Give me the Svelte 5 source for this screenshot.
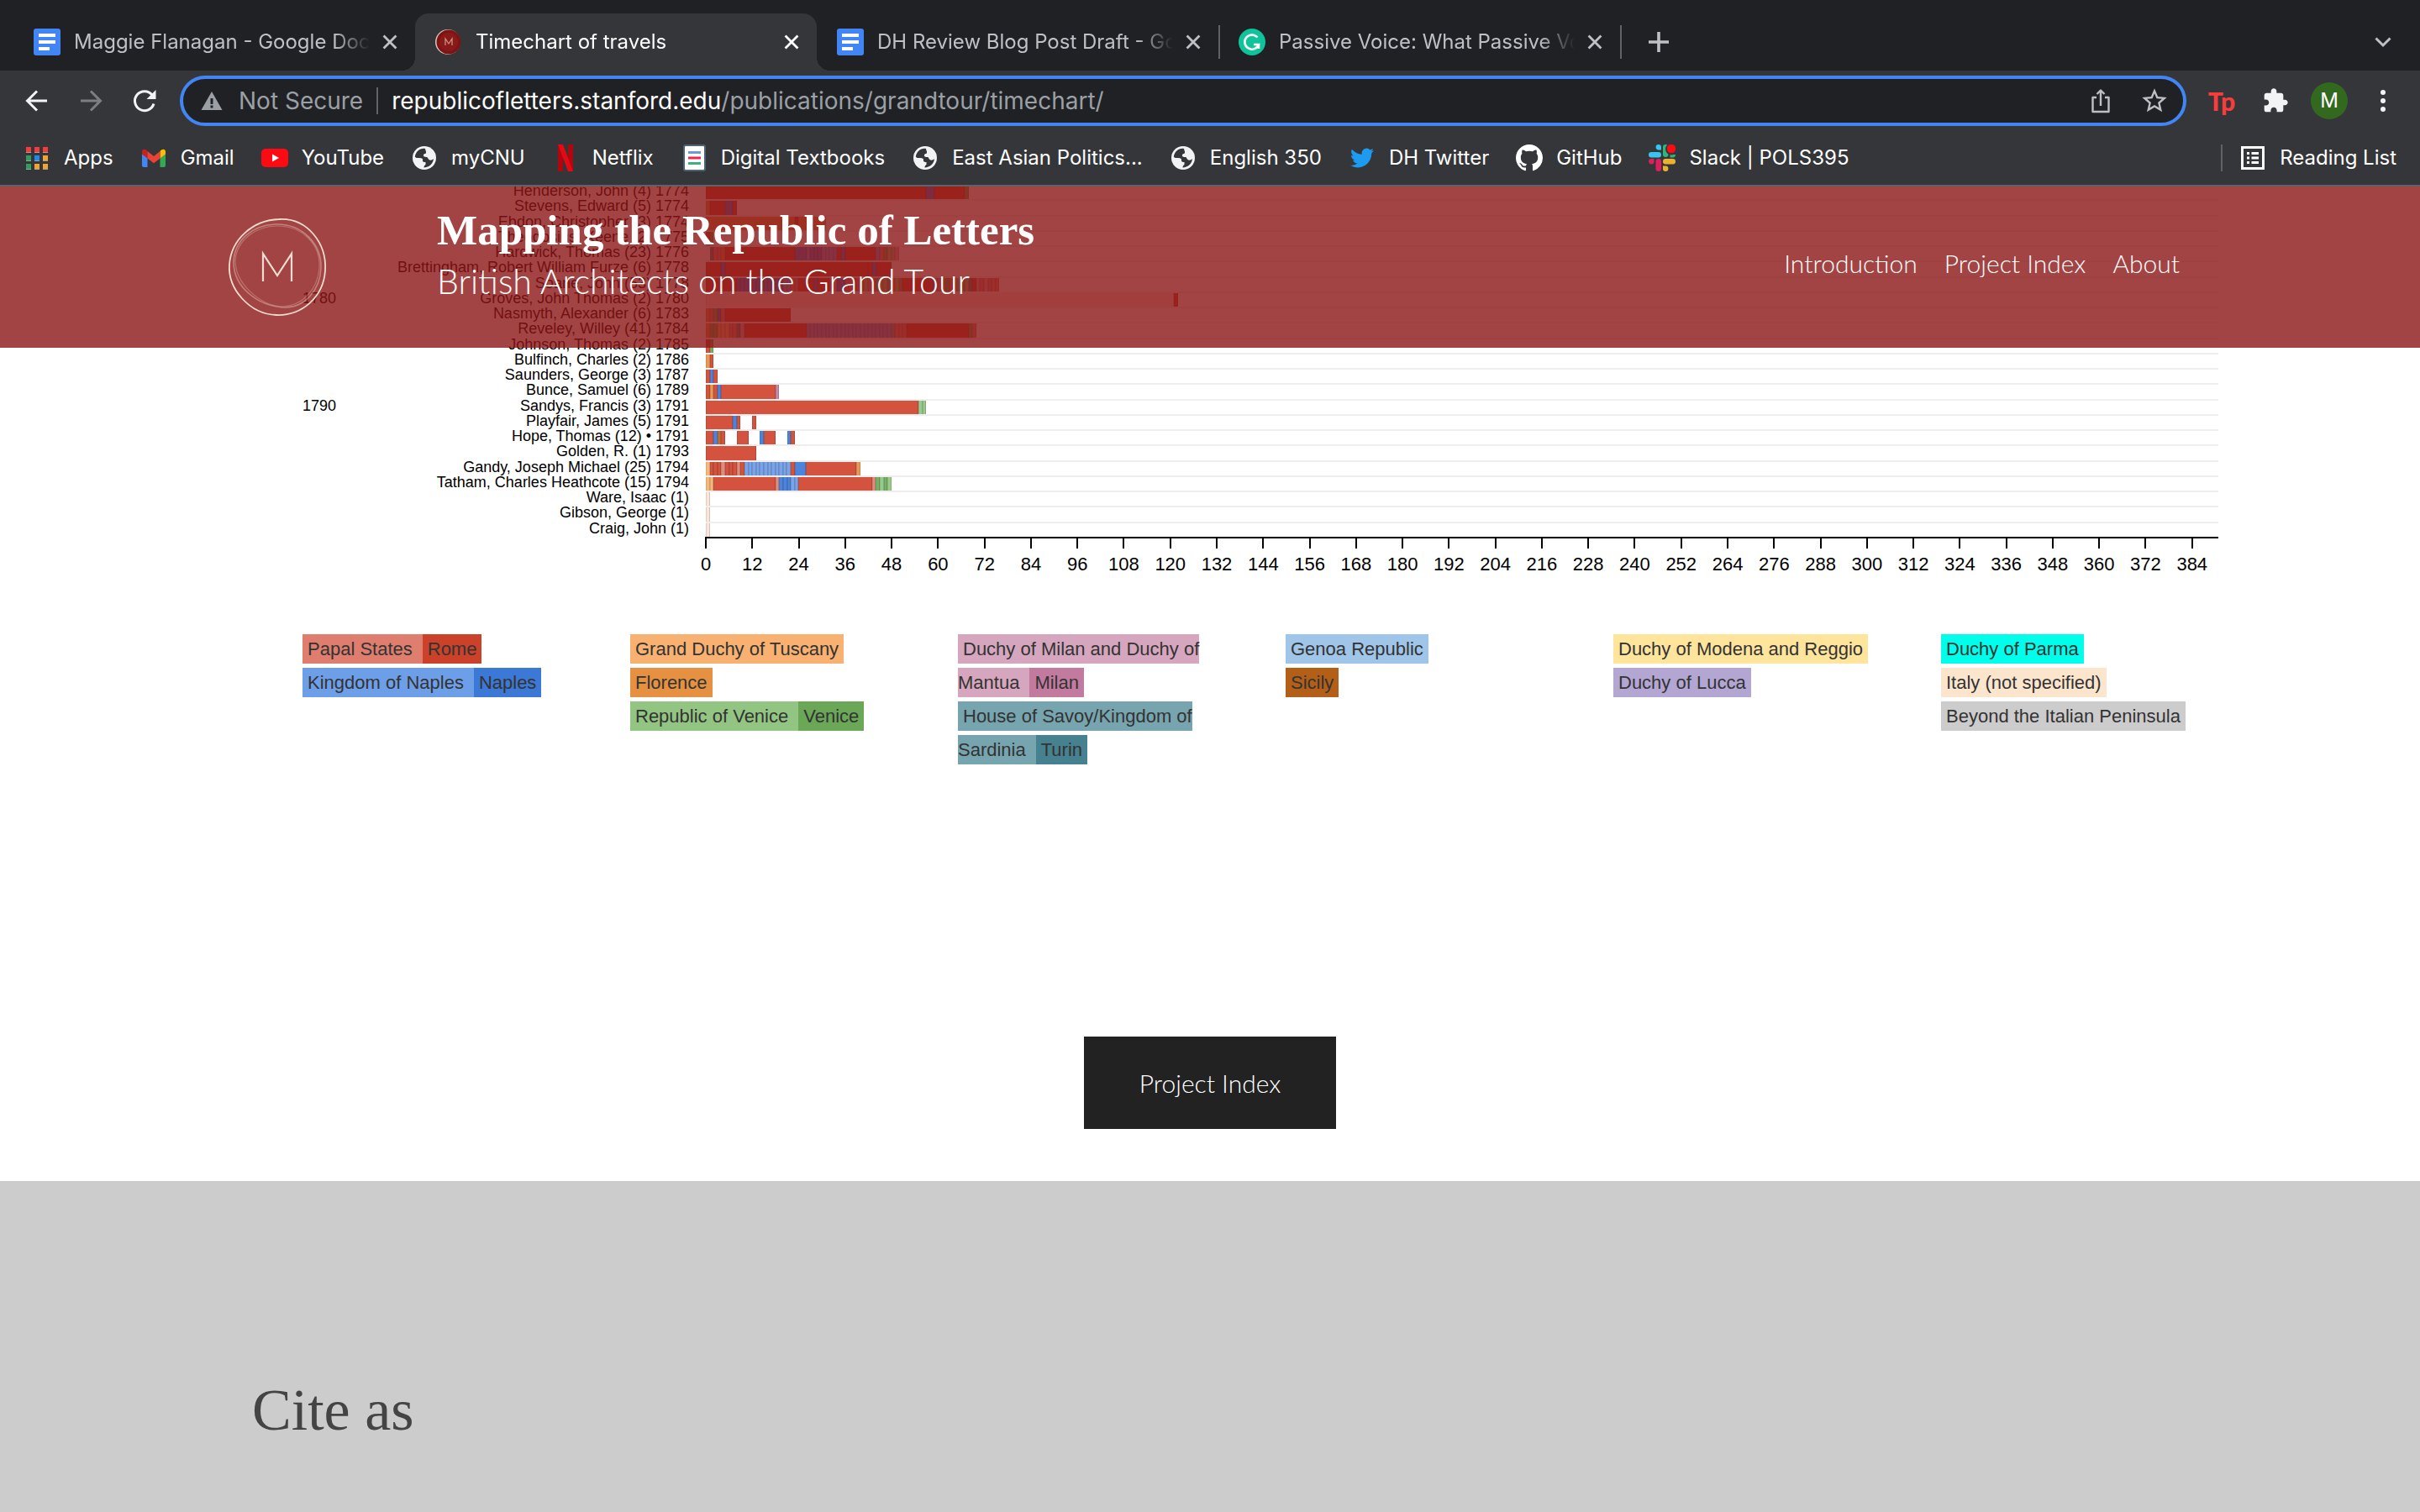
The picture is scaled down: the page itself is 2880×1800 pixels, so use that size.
<script>
  const tabs = [
    { title: 'Maggie Flanagan - Google Docs', icon: 'docs' },
    { title: 'Timechart of travels', icon: 'seal', active: true },
    { title: 'DH Review Blog Post Draft - Google Docs', icon: 'docs' },
    { title: 'Passive Voice: What Passive Voice Is', icon: 'grammarly' }
  ];

  const bookmarks = [
    ['Apps', 'apps'],
    ['Gmail', 'gmail'],
    ['YouTube', 'youtube'],
    ['myCNU', 'globe'],
    ['Netflix', 'netflix'],
    ['Digital Textbooks', 'textbook'],
    ['East Asian Politics...', 'globe'],
    ['English 350', 'globe'],
    ['DH Twitter', 'twitter'],
    ['GitHub', 'github'],
    ['Slack | POLS395', 'slack']
  ];

  const months = 391;
  const ticks = Array.from({ length: 33 }, (_, i) => i * 12);

  // Each stay is "<place><months>", optionally "x<repeat>"; "_" is a gap.
  const travellers = [
    ['Henderson, John (4) 1774', 'r57 n2 r8 v1'],
    ['Stevens, Edward (5) 1774', 'f1 r4 n2 r1'],
    ['Ebdon, Christopher (3) 1774', 'f23 r1 f7'],
    ['Theodosius, Keene (2) 1775', 'r1 v1'],
    ['Hardwick, Thomas (23) 1776', '_1 u1 p1x2 f1 r18 n3 k1 n1x3 k1x4 r1 n1 r8 k1 p1 v1 w1x2 d1'],
    ['Brettingham, Robert William Furze (6) 1778', 'r4 n1 r37 r1 n1 r4'],
    ['Soane, John (53) 1778', 'r2 r6 n1x12 k1x2 p1x2 r4 n1 r3 p1 d1 n2 p1x2 r1 p1 v1 w1 p1x2 v1 w1x2 v1 p1 w1 v1 r8 k1 p1 w1 v1 p1 w1x2 v1 w1 u1 r1 d1 p1 d1 p1x3'],
    ['Groves, John Thomas (2) 1780', 'i121 r1', '1780'],
    ['Nasmyth, Alexander (6) 1783', 'f1 p1 v1 n1 p1 r17'],
    ['Reveley, Willey (41) 1784', 'f1 v1x2 t1x3 p1x2 u1 d1 r16 k1x22 y1 p1x3 r16 v1 p1'],
    ['Johnson, Thomas (2) 1785', 'r1 v1'],
    ['Bulfinch, Charles (2) 1786', 'f1 r1'],
    ['Saunders, George (3) 1787', 'r1 n1 r1'],
    ['Bunce, Samuel (6) 1789', 'r1 f1 r1 n1 r14 m1'],
    ['Sandys, Francis (3) 1791', 'r55 w1x2', '1790'],
    ['Playfair, James (5) 1791', 'r7 n1 r1 _3 r1'],
    ['Hope, Thomas (12) • 1791', 'r2 n1 s1 r1 _3 r3 _3 n1 r3 _3 n1 r1'],
    ['Golden, R. (1) 1793', 'r13'],
    ['Gandy, Joseph Michael (25) 1794', 't1 r1x3 p1 r1x3 p1 r1 k1x12 r1 n3 r13 f1'],
    ['Tatham, Charles Heathcote (15) 1794', 't1x2 r16 p1 n1x3 k1x2 r19 p1 v1 w1 v1 w1'],
    ['Ware, Isaac (1)', 'i1'],
    ['Gibson, George (1)', 'i1'],
    ['Craig, John (1)', 'i1']
  ].map(([name, stays, decade = '']) => ({ name, decade, stays: expand(stays) }));

  function expand(text) {
    return text.split(' ').flatMap((token) => {
      const [, place, length, repeat = '1'] = token.match(/^(.)(\d+)(?:x(\d+))?$/);
      return Array.from({ length: +repeat }, () => ({ place, length: +length }));
    });
  }

  const legend = [
    [[['Papal States', 'papal'], ['Rome', 'rome']], [['Kingdom of Naples', 'kingdom'], ['Naples', 'naples']]],
    [[['Grand Duchy of Tuscany', 'tuscany']], [['Florence', 'florence']], [['Republic of Venice', 'republic'], ['Venice', 'venice']]],
    [[['Duchy of Milan and Duchy of Mantua', 'duchy'], ['Milan', 'milan']], [['House of Savoy/Kingdom of Sardinia', 'savoy'], ['Turin', 'turin']]],
    [[['Genoa Republic', 'genoa']], [['Sicily', 'sicily']]],
    [[['Duchy of Modena and Reggio', 'modena']], [['Duchy of Lucca', 'lucca']]],
    [[['Duchy of Parma', 'parma']], [['Italy (not specified)', 'italy']], [['Beyond the Italian Peninsula', 'beyond']]]
  ];
</script>

{#snippet icon(name)}
  <svg class="icon" viewBox="0 0 32 32" aria-hidden="true">
    {#if name === 'docs'}
      <rect width="32" height="32" rx="3" fill="#4285f4" />
      <path d="M6 6h20v4H6zM6 14h20v4H6zM6 22h13v4H6z" fill="#fff" />
    {:else if name === 'seal'}
      <circle cx="15" cy="16" r="15" fill="#d8c9c0" />
      <circle cx="16" cy="16" r="14.5" fill="#7c1416" />
      <circle cx="16" cy="16" r="11" fill="#8a1a1a" />
      <path d="M12 20v-8l4 6 4-6v8" fill="none" stroke="#c98" stroke-width="1.2" />
    {:else if name === 'grammarly'}
      <circle cx="16" cy="16" r="16" fill="#0fc39a" />
      <path d="M22.5 10.5A8.6 8.6 0 1 0 24 19h-6M24 19v5" fill="none" stroke="#fff" stroke-width="2.6" />
    {:else if name === 'apps'}
      <g fill="#9aa0a6"><path d="M3 3h6v7H3zM13 3h6v7h-6zM23 3h6v7h-6zM3 13h6v7H3zM13 13h6v7h-6zM23 13h6v7h-6zM3 23h6v7H3zM13 23h6v7h-6zM23 23h6v7h-6z" /></g>
      <path d="M3 3h6v6H3zM13 3h6v6h-6zM23 3h6v6h-6z" fill="#fb3a36" />
      <path d="M3 13h6v6H3zM3 23h6v6H3z" fill="#2d9f5c" />
      <path d="M13 13h6v6h-6z" fill="#1a8cf0" />
      <path d="M23 13h6v6h-6zM13 23h6v6h-6zM23 23h6v6h-6z" fill="#f5a32a" />
    {:else if name === 'gmail'}
      <path d="M2 11v14a2 2 0 0 0 2 2h4.500V16z" fill="#4285f4" />
      <path d="M30 11v14a2 2 0 0 1-2 2h-4.500V16z" fill="#34a853" />
      <path d="M8.500 8v8.500L2 11.500V9c0-3.500 3.500-4.500 6.500-1z" fill="#c5221f" />
      <path d="M23.500 8v8.500l6.500-5V9c0-3.500-3.500-4.500-6.500-1z" fill="#fbbc04" />
      <path d="M8.500 8l7.500 6 7.500-6v8.500l-7.500 5.800-7.500-5.800z" fill="#ea4335" />
    {:else if name === 'youtube'}
      <rect y="5" width="32" height="22" rx="5" fill="#ff0a12" />
      <path d="M13 11.500l8 4.500-8 4.500z" fill="#fff" />
    {:else if name === 'globe'}
      <circle cx="16" cy="16" r="14" fill="#f1f3f4" />
      <path d="M17 5c-6-1-11 3-12.200 9.500 1.200 2 2.700 1.500 5.200 1.500 3 0 4.500 1 4 3-.5 1.500 1.500 2 3.500 2v3c-1.500 1-2 2-2 3.500 6-.2 11-4.500 11.500-10.500-1.500 1.500-4 2.300-5.500 1-1.500-1-1-3-3-3s-4-.5-3.500-2.500 2.500-1 3-2.500-1-3.500-1-5z" fill="#35363a" />
    {:else if name === 'netflix'}
      <path d="M7 0h6v32H7z" fill="#b1060f" />
      <path d="M19 0h6v32h-6z" fill="#b1060f" />
      <path d="M7 0h6l12 32h-6z" fill="#e50914" />
    {:else if name === 'textbook'}
      <rect x="4" y="1" width="25" height="30" rx="2" fill="#fff" stroke="#4d6272" stroke-width="2" />
      <path d="M9 8h15v3H9z" fill="#6d9bd8" />
      <path d="M9 14.500h15v3H9z" fill="#f2264b" />
      <path d="M9 21h15v3H9z" fill="#3fae84" />
    {:else if name === 'twitter'}
      <g transform="translate(2 2) scale(1.17)">
        <path fill="#1d9bf0" d="M23.953 4.570a10 10 0 01-2.825.775 4.958 4.958 0 002.163-2.723c-.951.555-2.005.959-3.127 1.184a4.920 4.920 0 00-8.384 4.482C7.690 8.095 4.067 6.130 1.640 3.162a4.822 4.822 0 00-.666 2.475c0 1.710.87 3.213 2.188 4.096a4.904 4.904 0 01-2.228-.616v.06a4.923 4.923 0 003.946 4.827 4.996 4.996 0 01-2.212.085 4.936 4.936 0 004.604 3.417 9.867 9.867 0 01-6.102 2.105c-.39 0-.779-.023-1.170-.067a13.995 13.995 0 007.557 2.209c9.053 0 13.998-7.496 13.998-13.985 0-.21 0-.42-.015-.63A9.935 9.935 0 0024 4.590z" />
      </g>
    {:else if name === 'github'}
      <g transform="scale(2)">
        <path fill="#fff" d="M8 0C3.580 0 0 3.580 0 8c0 3.540 2.290 6.530 5.470 7.590.4.070.55-.17.55-.38 0-.19-.01-.82-.01-1.490-2.010.370-2.530-.49-2.690-.94-.09-.23-.48-.94-.82-1.130-.28-.15-.68-.52-.01-.53.630-.01 1.080.580 1.230.820.720 1.210 1.870.870 2.330.660.070-.52.280-.87.510-1.070-1.780-.2-3.640-.89-3.640-3.950 0-.87.310-1.590.820-2.150-.08-.2-.36-1.020.080-2.120 0 0 .67-.21 2.200.820.640-.18 1.320-.27 2-.27.680 0 1.360.090 2 .27 1.530-1.040 2.200-.82 2.200-.82.440 1.100.160 1.920.080 2.120.510.560.820 1.270.820 2.150 0 3.070-1.870 3.750-3.650 3.950.290.250.540.730.540 1.480 0 1.070-.01 1.930-.01 2.200 0 .21.150.460.550.380A8.013 8.013 0 0016 8c0-4.420-3.580-8-8-8z" />
      </g>
    {:else if name === 'slack'}
      <g fill="#36c5f0"><rect y="9" width="15" height="6.500" rx="3.200" /><path d="M15 6.500V3.200a3.200 3.200 0 1 0-3.200 3.300z" /></g>
      <g fill="#2eb67d"><rect x="17" width="6.500" height="15" rx="3.200" /><path d="M25.500 15.500h3.200A3.200 3.200 0 0 0 32 12h-6.500z" /></g>
      <g fill="#e01e5a"><rect x="8.500" y="17" width="6.500" height="15" rx="3.200" /><path d="M6.500 17H3.200a3.200 3.200 0 1 0 3.300 3.200z" /></g>
      <g fill="#ecb22e"><rect x="17" y="17" width="15" height="6.500" rx="3.200" /><path d="M17 25.500v3.200a3.200 3.200 0 1 0 3.200-3.200z" /></g>
      <circle cx="27" cy="5.500" r="7" fill="#35363a" />
      <circle cx="27" cy="5" r="5.200" fill="#ff0a12" />
    {:else if name === 'back'}
      <path d="M28 16H5M16 4.500L4.500 16 16 27.500" fill="none" stroke="#f1f3f4" stroke-width="3" />
    {:else if name === 'forward'}
      <path d="M4 16h23M16 4.500L27.500 16 16 27.500" fill="none" stroke="#7d7e82" stroke-width="3" />
    {:else if name === 'reload'}
      <path d="M27 19.500A11.500 11.500 0 1 1 25 9" fill="none" stroke="#f1f3f4" stroke-width="3" />
      <path d="M29.500 3v11h-11z" fill="#f1f3f4" />
    {:else if name === 'warning'}
      <path d="M16 5l12.500 22h-25z" fill="#9aa0a6" />
      <path d="M14.500 13h3v7h-3zM14.500 21.500h3v3h-3z" fill="#202124" />
    {:else if name === 'share'}
      <path d="M11 12H6.500v17h19V12H21M16 22V4M11.500 8L16 3.500 20.500 8" fill="none" stroke="#bdc1c6" stroke-width="2.400" stroke-linejoin="round" />
    {:else if name === 'star'}
      <path transform="translate(-1.600 -1.600) scale(1.467)" fill="#bdc1c6" d="M22 9.240l-7.190-.62L12 2 9.190 8.630 2 9.240l5.460 4.730L5.820 21 12 17.270 18.180 21l-1.630-7.030L22 9.240zM12 15.400l-3.760 2.270 1-4.280-3.320-2.880 4.380-.38L12 6.100l1.710 4.040 4.380.380-3.320 2.880 1 4.280L12 15.400z" />
    {:else if name === 'puzzle'}
      <path transform="scale(1.333)" fill="#f1f3f4" d="M20.500 11H19V7c0-1.100-.9-2-2-2h-4V3.500C13 2.120 11.880 1 10.500 1S8 2.120 8 3.500V5H4c-1.100 0-1.990.9-1.990 2v3.800H3.500c1.490 0 2.700 1.210 2.700 2.700s-1.210 2.700-2.700 2.700H2V20c0 1.100.9 2 2 2h3.800v-1.500c0-1.490 1.210-2.700 2.700-2.700 1.490 0 2.700 1.210 2.700 2.700V22H17c1.100 0 2-.9 2-2v-4h1.500c1.380 0 2.500-1.120 2.500-2.500S21.880 11 20.500 11z" />
    {:else if name === 'dots'}
      <g fill="#f1f3f4"><circle cx="16" cy="6" r="3" /><circle cx="16" cy="16" r="3" /><circle cx="16" cy="26" r="3" /></g>
    {:else if name === 'close'}
      <path d="M7.500 7.500l17 17M24.500 7.500l-17 17" stroke="currentColor" stroke-width="3.200" />
    {:else if name === 'plus'}
      <path d="M16 4v24M4 16h24" stroke="#bdc1c6" stroke-width="3.600" />
    {:else if name === 'chevron'}
      <path d="M7.500 11.500L16 20l8.500-8.500" fill="none" stroke="#bdc1c6" stroke-width="3" />
    {:else if name === 'list'}
      <path d="M3.500 3.500h25v25h-25z" fill="none" stroke="#fff" stroke-width="3" />
      <path d="M9 9h3v3H9zM14.500 9h8.500v3h-8.500zM9 14.500h3v3H9zM14.500 14.500h8.500v3h-8.500zM9 20h3v3H9zM14.500 20h8.500v3h-8.500z" fill="#fff" />
    {/if}
  </svg>
{/snippet}

<div class="browser">
  <div class="tabstrip">
    {#each tabs as tab}
      <div class="tab" class:active={tab.active}>
        {@render icon(tab.icon)}
        <span class="tab-title">{tab.title}</span>
        <button class="close" aria-label="Close tab">{@render icon('close')}</button>
      </div>
    {/each}
    <button class="plain new-tab" aria-label="New tab">{@render icon('plus')}</button>
    <button class="plain search-tabs" aria-label="Search tabs">{@render icon('chevron')}</button>
  </div>

  <div class="toolbar">
    <button class="plain" aria-label="Back">{@render icon('back')}</button>
    <button class="plain" aria-label="Forward">{@render icon('forward')}</button>
    <button class="plain" aria-label="Reload">{@render icon('reload')}</button>
    <div class="omnibox">
      <button class="security">{@render icon('warning')}<span>Not Secure</span></button>
      <label class="address">
        <span class="host">republicofletters.stanford.edu</span>
        <input aria-label="Address" value="/publications/grandtour/timechart/" />
      </label>
      <button class="plain" aria-label="Share">{@render icon('share')}</button>
      <button class="plain" aria-label="Bookmark this page">{@render icon('star')}</button>
    </div>
    <button class="plain tp" aria-label="Extension">Tp</button>
    <button class="plain" aria-label="Extensions">{@render icon('puzzle')}</button>
    <button class="plain" aria-label="Profile"><span class="avatar">M</span></button>
    <button class="plain" aria-label="Menu">{@render icon('dots')}</button>
  </div>

  <nav class="bookmarks" aria-label="Bookmarks">
    {#each bookmarks as [label, name]}
      <a href="#{name}">{@render icon(name)}{label}</a>
    {/each}
    <button class="reading">{@render icon('list')}Reading List</button>
  </nav>
</div>

<div class="page">
  <header class="site-header">
    <a class="logo" href="#home" aria-label="Home">
      <svg viewBox="0 0 120 120" fill="none" stroke="#f0dcd0">
        <path d="M62 3C96 1 119 32 117 64c-2 32-28 54-58 53C27 116 1 86 3 57 5 27 31 4 62 3z" stroke-width="1.800" />
        <path d="M58 9c32-1 55 24 54 52-1 27-20 48-45 47C37 106 8 84 8 54 9 28 30 10 58 9z" stroke-width="1.600" opacity=".4" />
        <path d="M60 11c30 0 52 22 50 50-2 26-20 45-44 46C40 106 10 80 10 52 12 28 34 11 60 11z" stroke-width="1.200" opacity=".3" />
        <path d="M43 77V44l17 26 17-26v33" stroke-width="2.200" />
      </svg>
    </a>
    <div class="titles">
      <h1>Mapping the Republic of Letters</h1>
      <p>British Architects on the Grand Tour</p>
    </div>
    <nav class="site-nav" aria-label="Site">
      <a href="#introduction">Introduction</a>
      <a href="#index">Project Index</a>
      <a href="#about">About</a>
    </nav>
  </header>

  <main>
    <section class="chart" aria-label="Timechart of travels">
      {#each travellers as person}
        <div class="row">
          <span class="decade">{person.decade}</span>
          <span class="name">{person.name}</span>
          <div class="track">
            {#each person.stays as stay}
              <i class="stay {stay.place}" style="width: {(stay.length / months) * 100}%"></i>
            {/each}
          </div>
        </div>
      {/each}
    </section>
    <div class="axis">
      {#each ticks as tick}
        <div class="tick"><span>{tick}</span></div>
      {/each}
    </div>

    <section class="legend" aria-label="Places">
      {#each legend as column}
        <ul>
          {#each column as places}
            <li>{#each places as [label, place], i}<span class={place} class:paired={i < places.length - 1}>{label}</span>{/each}</li>
          {/each}
        </ul>
      {/each}
    </section>

    <a class="index-button" href="#index">Project Index</a>
  </main>

  <footer>
    <h2>Cite as</h2>
  </footer>
</div>

<style>
  :global(body) {
    background: #fff;
    overflow: hidden;
  }
  :global(#app) {
    display: flex;
    flex-direction: column;
    height: 100vh;
  }
  button,
  input {
    border: 0;
    padding: 0;
    background: none;
    color: inherit;
    font: inherit;
  }
  a {
    color: inherit;
    text-decoration: none;
  }
  .icon {
    display: block;
    flex: none;
    width: 32px;
    height: 32px;
  }

  .browser {
    flex: none;
    background: #35363a;
    border-bottom: 2px solid #5f6368;
    color: #fff;
    font: 24px/32px Inter, sans-serif;
  }
  .tabstrip {
    display: flex;
    height: 68px;
    padding: 16px 12px 0 16px;
    background: #202124;
  }
  .tab {
    position: relative;
    display: flex;
    align-items: center;
    box-sizing: border-box;
    width: 478px;
    padding: 0 16px 0 24px;
    color: #bdc1c6;
  }
  .tab:nth-child(n + 3)::after {
    content: '';
    position: absolute;
    right: -2px;
    top: 14px;
    width: 2px;
    height: 40px;
    background: #5f6368;
  }
  .tab.active {
    border-radius: 16px 16px 0 0;
    background: #35363a;
    color: #fff;
  }
  .tab.active::before,
  .tab.active::after {
    content: '';
    position: absolute;
    bottom: 0;
    width: 16px;
    height: 16px;
  }
  .tab.active::before {
    left: -16px;
    background: radial-gradient(circle at 0 0, transparent 16px, #35363a 16px);
  }
  .tab.active::after {
    right: -16px;
    background: radial-gradient(circle at 100% 0, transparent 16px, #35363a 16px);
  }
  .tab-title {
    flex: 1;
    margin: 0 10px 0 16px;
    overflow: hidden;
    white-space: nowrap;
    mask-image: linear-gradient(90deg, #000 88%, transparent);
  }
  .close .icon {
    width: 28px;
    height: 28px;
  }
  .plain {
    display: flex;
    flex: none;
    align-items: center;
    justify-content: center;
    width: 64px;
  }
  .new-tab {
    margin-left: 14px;
  }
  .search-tabs {
    margin-left: auto;
  }

  .toolbar {
    display: flex;
    align-items: stretch;
    height: 60px;
    padding: 6px 12px;
  }
  .omnibox {
    display: flex;
    flex: 1;
    align-items: center;
    box-sizing: border-box;
    margin: 0 10px;
    padding: 0 2px 0 18px;
    border: 4px solid #4285f4;
    border-radius: 30px;
    background: #202124;
    font-size: 28px;
  }
  .security {
    display: flex;
    align-items: center;
    gap: 16px;
    padding-right: 16px;
    border-right: 2px solid #5f6368;
    color: #9aa0a6;
  }
  .address {
    display: flex;
    flex: 1;
    margin-left: 16px;
  }
  .address input {
    flex: 1;
    color: #9aa0a6;
    outline: 0;
  }
  .tp {
    color: #fa3c3c;
    font: 900 30px/32px Lato, sans-serif;
  }
  .avatar {
    width: 44px;
    border-radius: 50%;
    background: #33691e;
    line-height: 44px;
    text-align: center;
  }

  .bookmarks {
    display: flex;
    align-items: center;
    gap: 32px;
    height: 64px;
    padding: 0 28px;
  }
  .bookmarks a,
  .reading {
    display: flex;
    align-items: center;
    gap: 16px;
    white-space: nowrap;
  }
  .reading {
    margin-left: auto;
    padding-left: 20px;
    border-left: 2px solid #5f6368;
  }

  .page {
    position: relative;
    display: flex;
    flex: 1;
    flex-direction: column;
    overflow: hidden;
    color: #333;
    font-family: 'Liberation Sans', sans-serif;
  }
  .site-header {
    position: absolute;
    inset: 0 0 auto;
    z-index: 1;
    display: flex;
    align-items: center;
    height: 192px;
    padding: 0 286px 0 270px;
    box-sizing: border-box;
    background: rgba(140, 21, 21, 0.8);
    color: #fff;
    font-family: Lato, sans-serif;
    font-weight: 300;
  }
  .logo svg {
    display: block;
    width: 120px;
    height: 120px;
  }
  .titles {
    margin: 0 auto 26px 130px;
  }
  h1,
  h2,
  .titles p {
    margin: 0;
  }
  h1 {
    font: 700 51px/60px 'Liberation Serif', serif;
  }
  .titles p {
    font-size: 41px;
    line-height: 62px;
  }
  .site-nav {
    display: flex;
    gap: 32px;
    margin-bottom: 10px;
    font-size: 30px;
    line-height: 40px;
  }

  main {
    display: flex;
    flex-direction: column;
    height: 1184px;
  }
  .chart {
    display: grid;
    grid-template-rows: repeat(23, 1fr);
    height: 420px;
    margin: -3px 240px 0 360px;
  }
  .row {
    display: grid;
    grid-template-columns: 60px 400px 1fr;
    min-height: 0;
    color: #000;
    font-size: 18px;
    line-height: 16px;
  }
  .name {
    text-align: right;
    white-space: nowrap;
  }
  .track {
    display: flex;
    margin-left: 20px;
    border-top: 2px solid #eee;
  }
  .stay {
    flex: none;
    box-shadow: inset -1px 0 rgba(0, 0, 0, 0.15), inset 1px 0 rgba(0, 0, 0, 0.1);
  }
  .stay._ { box-shadow: none; }
  .r { background: #d4533f; }
  .p { background: #e08d7e; }
  .n { background: #4c84db; }
  .k { background: #7aa3e8; }
  .f { background: #e59a55; }
  .t { background: #f5b77b; }
  .v { background: #78b067; }
  .w { background: #99ca8c; }
  .m { background: #c888a8; }
  .d { background: #d9a9bf; }
  .s { background: #c06f33; }
  .u { background: #588f97; }
  .y { background: #7fa9b3; }
  .i { background: #fbe6d6; }

  .axis {
    display: grid;
    grid-template-columns: repeat(32, 12fr) 7fr;
    margin: 0 240px 0 839px;
    border-top: 2px solid #000;
    color: #000;
    font-size: 22px;
    line-height: 24px;
  }
  .tick {
    min-width: 0;
  }
  .tick::before {
    content: '';
    display: block;
    width: 2px;
    height: 12px;
    margin-bottom: 7px;
    background: #000;
  }
  .tick span {
    display: flex;
    justify-content: center;
    width: 2px;
  }

  .legend {
    display: grid;
    grid-template-columns: repeat(6, 1fr);
    margin: 69px 180px 0 360px;
    font-size: 22px;
    line-height: 40px;
  }
  ul {
    margin: 0;
    padding: 0 70px 0 0;
    list-style: none;
  }
  li span {
    padding: 5px 6px;
  }
  li .paired {
    padding-right: 12px;
  }
  .papal { background: #df7e6e; }
  .rome { background: #cc412a; }
  .kingdom { background: #6d9ee8; }
  .naples { background: #3c78d6; }
  .tuscany { background: #f8b171; }
  .florence { background: #e69142; }
  .republic { background: #92c581; }
  .venice { background: #6aa757; }
  .duchy { background: #d5a6bd; }
  .milan { background: #c27b9f; }
  .savoy { background: #76a5af; }
  .turin { background: #45818e; }
  .genoa { background: #9fc5e8; }
  .sicily { background: #b45f17; }
  .modena { background: #ffe49c; }
  .lucca { background: #b3a6d3; }
  .parma { background: #00ffea; }
  .italy { background: #fce5cd; }
  .beyond { background: #ccc; }

  .index-button {
    align-self: center;
    width: 300px;
    margin: auto auto 62px;
    background: #222;
    color: #fff;
    font: 300 30px/110px Lato, sans-serif;
    text-align: center;
  }
  footer {
    flex: 1;
    padding: 231px 300px 0;
    background: #ccc;
  }
  h2 {
    color: #444;
    font: 400 70px/84px 'Liberation Serif', serif;
  }
</style>
